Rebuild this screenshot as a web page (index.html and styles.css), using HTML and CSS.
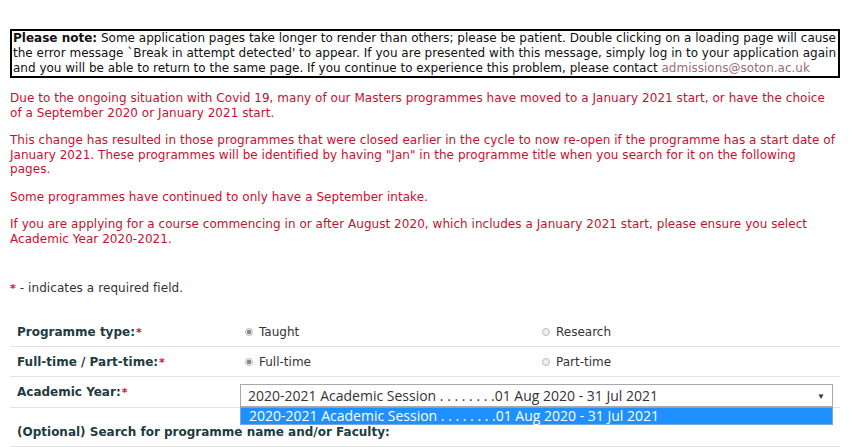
FILE: index.html
```html
<!DOCTYPE html>
<html>
<head>
<meta charset="utf-8">
<link rel="stylesheet" href="styles.css">
</head>
<body>
<div class="page">
  <div class="notice"><b>Please note:</b> Some application pages take longer to render than others; please be patient. Double clicking on a loading page will cause the error message `Break in attempt detected' to appear. If you are presented with this message, simply log in to your application again and you will be able to return to the same page. If you continue to experience this problem, please contact <span class="mail">admissions@soton.ac.uk</span></div>

  <p class="warn">Due to the ongoing situation with Covid 19, many of our Masters programmes have moved to a January 2021 start, or have the choice<br>of a September 2020 or January 2021 start.</p>
  <p class="warn">This change has resulted in those programmes that were closed earlier in the cycle to now re-open if the programme has a start date of<br>January 2021. These programmes will be identified by having "Jan" in the programme title when you search for it on the following<br>pages.</p>
  <p class="warn">Some programmes have continued to only have a September intake.</p>
  <p class="warn">If you are applying for a course commencing in or after August 2020, which includes a January 2021 start, please ensure you select Academic Year 2020-2021.</p>

  <p class="req"><span class="star">*</span> - indicates a required field.</p>

  <div class="form">
    <div class="row">
      <div class="label">Programme type:<span class="star">*</span></div>
      <div class="opt"><span class="radio on"></span>Taught</div>
      <div class="opt"><span class="radio"></span>Research</div>
    </div>
    <div class="row">
      <div class="label">Full-time / Part-time:<span class="star">*</span></div>
      <div class="opt"><span class="radio on"></span>Full-time</div>
      <div class="opt"><span class="radio"></span>Part-time</div>
    </div>
    <div class="row year">
      <div class="label">Academic Year:<span class="star">*</span></div>
      <div class="selwrap">
        <div class="select"><span>2020-2021 Academic Session . . . . . . . .01 Aug 2020 - 31 Jul 2021</span><span class="arrow">&#9660;</span></div>
        <div class="list">2020-2021 Academic Session . . . . . . . .01 Aug 2020 - 31 Jul 2021</div>
      </div>
    </div>
    <div class="row search">
      <div class="label">(Optional) Search for programme name and/or Faculty:</div>
    </div>
  </div>
</div>
</body>
</html>
```
FILE: styles.css
```css
html, body { margin: 0; padding: 0; background: #fff; }
body { font-family: "DejaVu Sans", Verdana, sans-serif; font-size: 12px; color: #222; }
.page { padding: 29px 12px 0 10px; }
.notice {
  border: 2px solid #000;
  padding: 0 2px 0 1px;
  line-height: 15px;
  text-align: justify;
  color: #111;
}
.notice b { font-weight: bold; }
.mail { color: #a26a76; }
.warn { color: #c8102e; margin: 13px 0 0; line-height: 14.5px; letter-spacing: 0.04px; }
.req { margin: 35px 0 0; line-height: 14px; color: #333; letter-spacing: 0.08px; }
.star { color: #d0103a; font-weight: bold; font-size: 11px; margin-left: 1px; }
.req .star { margin-left: 0; }
.form { margin-top: 21px; }
.row {
  display: grid;
  grid-template-columns: 230px 297px 1fr;
  border-bottom: 1px solid #e2e2e2;
  height: 29px;
  align-items: center;
}
.label { font-weight: bold; color: #1d3b42; padding-left: 7px; white-space: nowrap; }
.opt { display: flex; align-items: center; padding-left: 5px; color: #333; }
.radio {
  width: 8px; height: 8px; border-radius: 50%;
  border: 1px solid #bbb; background: #eee; margin-right: 6px; box-sizing: border-box;
}
.radio.on { background: radial-gradient(circle, #888 0 2px, #eee 2.5px); }
.row.year { height: 30px; align-items: start; }
.row.year .label { padding-top: 8px; }
.selwrap { grid-column: 2 / 4; position: relative; padding-top: 7px; padding-right: 7px; }
.select {
  height: 23px; border: 1px solid #a9a9a9; box-sizing: border-box;
  display: flex; align-items: center; justify-content: space-between;
  font-family: "Open Sans", "Liberation Sans", sans-serif; font-size: 14px; color: #333;
  padding: 0 7px 0 7px;
}
.arrow { font-size: 8px; color: #333; }
.list {
  position: absolute; left: 0; right: 7px; top: 30px;
  height: 18px; background: #1e90ff; color: #fff;
  font-family: "Open Sans", "Liberation Sans", sans-serif; font-size: 14px;
  line-height: 16px; padding-left: 8px; box-sizing: border-box;
  border: 1px solid #7aa7d8;
}
.row.search { height: 38px; align-items: end; }
.row.search .label { padding-bottom: 7px; }
```
